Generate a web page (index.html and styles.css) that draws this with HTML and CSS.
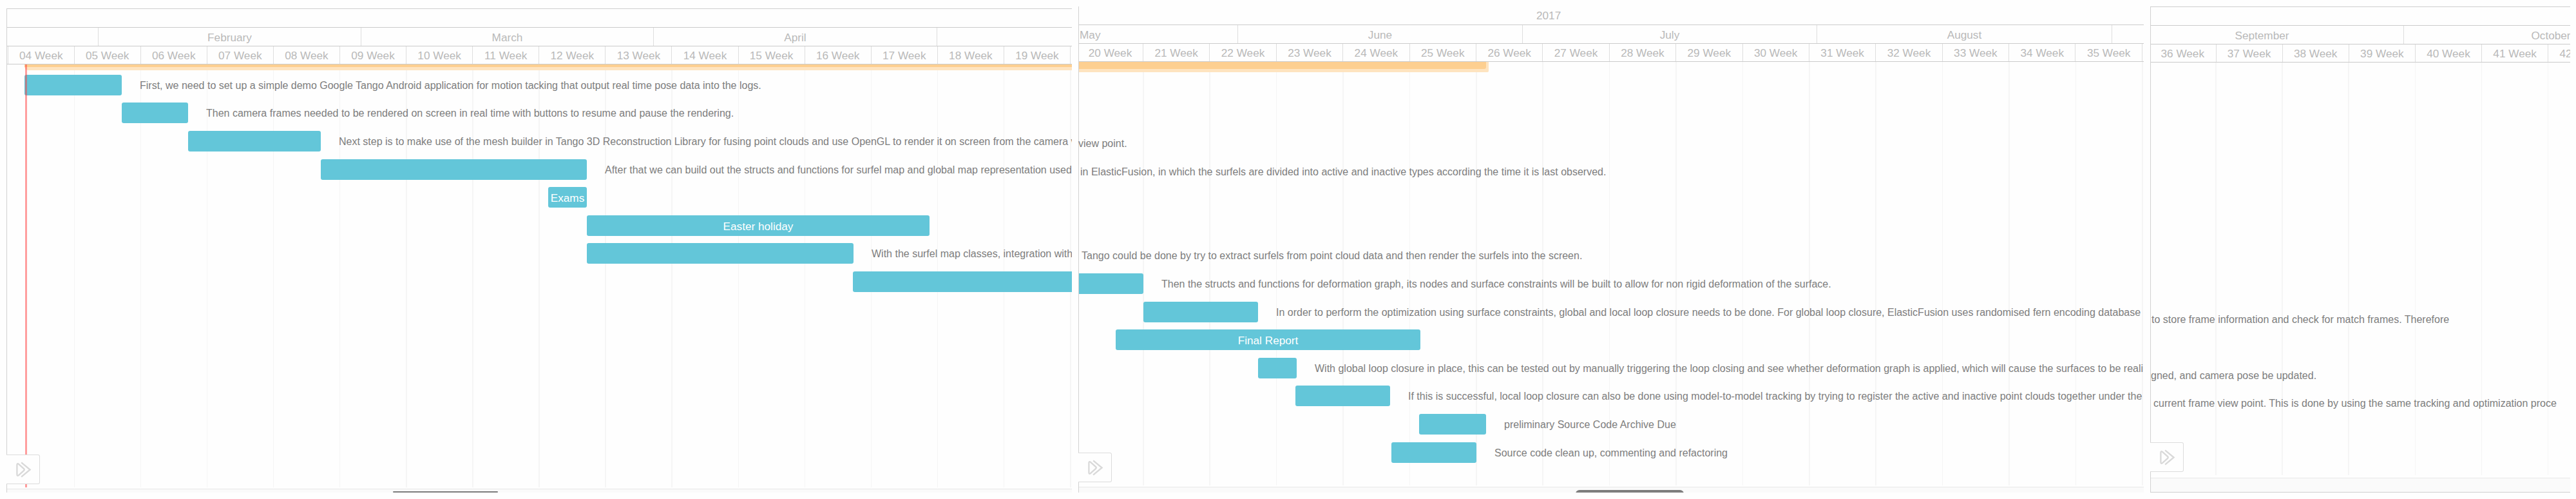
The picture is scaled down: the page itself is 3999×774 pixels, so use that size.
FILE: index.html
```html
<!DOCTYPE html>
<html lang="en">
<head>
<meta charset="utf-8">
<title>Project timeline</title>
<link rel="stylesheet" href="styles.css">
</head>
<body>
<main class="timeline">
  <section class="panel panel-spring">
    <header class="scale">
      <div class="years"></div>
      <div class="months"><span style="width:142px"></span><span style="width:408px">February</span><span style="width:454px">March</span><span style="width:440px">April</span></div>
      <div class="weeks"><span class="stub"></span><span class="first">04 Week</span><span>05 Week</span><span>06 Week</span><span>07 Week</span><span>08 Week</span><span>09 Week</span><span>10 Week</span><span>11 Week</span><span>12 Week</span><span>13 Week</span><span>14 Week</span><span>15 Week</span><span>16 Week</span><span>17 Week</span><span>18 Week</span><span>19 Week</span></div>
    </header>
    <div class="chart">
      <div class="summary"></div>
      <div class="today"></div>
      <div class="row"><i class="bar" style="margin-left:27px;width:151px"></i><span class="label">First, we need to set up a simple demo Google Tango Android application for motion tacking that output real time pose data into the logs.</span></div>
      <div class="row"><i class="bar" style="margin-left:178px;width:103px"></i><span class="label">Then camera frames needed to be rendered on screen in real time with buttons to resume and pause the rendering.</span></div>
      <div class="row"><i class="bar" style="margin-left:281px;width:206px"></i><span class="label">Next step is to make use of the mesh builder in Tango 3D Reconstruction Library for fusing point clouds and use OpenGL to render it on screen from the camera v</span></div>
      <div class="row"><i class="bar" style="margin-left:487px;width:413px"></i><span class="label">After that we can build out the structs and functions for surfel map and global map representation used</span></div>
      <div class="row"><b class="bar" style="margin-left:840px;width:60px">Exams</b></div>
      <div class="row"><b class="bar" style="margin-left:900px;width:532px">Easter holiday</b></div>
      <div class="row"><i class="bar" style="margin-left:900px;width:414px"></i><span class="label">With the surfel map classes, integration with</span></div>
      <div class="row"><i class="bar open-right" style="margin-left:1313px;width:340px"></i></div>
      <div class="toggle"><svg viewBox="0 0 26 26"><path d="M2.5 5.5 Q2.5 2 5.2 4.1 L13.6 11.5 Q15 13 13.6 14.5 L5.2 21.9 Q2.5 24 2.5 20.5 Z"/><path d="M9.5 1.5 L23.5 13 L9.5 24.5"/></svg></div>
    </div>
    <footer class="scroll"><div class="thumb"></div></footer>
  </section>

  <section class="panel panel-summer">
    <header class="scale">
      <div class="years"><span>2017</span></div>
      <div class="months"><span class="cut" style="width:247px">May</span><span style="width:442px">June</span><span style="width:457px">July</span><span style="width:458px">August</span></div>
      <div class="weeks"><span class="first">20 Week</span><span>21 Week</span><span>22 Week</span><span>23 Week</span><span>24 Week</span><span>25 Week</span><span>26 Week</span><span>27 Week</span><span>28 Week</span><span>29 Week</span><span>30 Week</span><span>31 Week</span><span>32 Week</span><span>33 Week</span><span>34 Week</span><span>35 Week</span></div>
    </header>
    <div class="chart">
      <div class="summary"></div>
      <div class="row"></div>
      <div class="row"></div>
      <div class="row"><span class="text" style="margin-left:-1px">view point.</span></div>
      <div class="row"><span class="text" style="margin-left:2px">in ElasticFusion, in which the surfels are divided into active and inactive types according the time it is last observed.</span></div>
      <div class="row"></div>
      <div class="row"></div>
      <div class="row"><span class="text" style="margin-left:4px">Tango could be done by try to extract surfels from point cloud data and then render the surfels into the screen.</span></div>
      <div class="row"><i class="bar open-left" style="width:100px"></i><span class="label">Then the structs and functions for deformation graph, its nodes and surface constraints will be built to allow for non rigid deformation of the surface.</span></div>
      <div class="row"><i class="bar" style="margin-left:100px;width:178px"></i><span class="label">In order to perform the optimization using surface constraints, global and local loop closure needs to be done. For global loop closure, ElasticFusion uses randomised fern encoding database</span></div>
      <div class="row"><b class="bar" style="margin-left:57px;width:473px">Final Report</b></div>
      <div class="row"><i class="bar" style="margin-left:278px;width:60px"></i><span class="label">With global loop closure in place, this can be tested out by manually triggering the loop closing and see whether deformation graph is applied, which will cause the surfaces to be reali</span></div>
      <div class="row"><i class="bar" style="margin-left:336px;width:147px"></i><span class="label">If this is successful, local loop closure can also be done using model-to-model tracking by trying to register the active and inactive point clouds together under the</span></div>
      <div class="row"><i class="bar" style="margin-left:528px;width:104px"></i><span class="label">preliminary Source Code Archive Due</span></div>
      <div class="row"><i class="bar" style="margin-left:485px;width:132px"></i><span class="label">Source code clean up, commenting and refactoring</span></div>
      <div class="toggle"><svg viewBox="0 0 26 26"><path d="M2.5 5.5 Q2.5 2 5.2 4.1 L13.6 11.5 Q15 13 13.6 14.5 L5.2 21.9 Q2.5 24 2.5 20.5 Z"/><path d="M9.5 1.5 L23.5 13 L9.5 24.5"/></svg></div>
    </div>
    <footer class="scroll"><div class="thumb"></div></footer>
  </section>

  <section class="panel panel-autumn">
    <header class="scale">
      <div class="years"></div>
      <div class="months"><span class="september" style="width:393px">September</span><span style="width:457px">October</span></div>
      <div class="weeks"><span class="first">36 Week</span><span>37 Week</span><span>38 Week</span><span>39 Week</span><span>40 Week</span><span>41 Week</span><span>42 Week</span></div>
    </header>
    <div class="chart">
      <div class="row"></div>
      <div class="row"></div>
      <div class="row"></div>
      <div class="row"></div>
      <div class="row"></div>
      <div class="row"></div>
      <div class="row"></div>
      <div class="row"></div>
      <div class="row"><span class="text" style="margin-left:1px">to store frame information and check for match frames. Therefore</span></div>
      <div class="row"></div>
      <div class="row"><span class="text">gned, and camera pose be updated.</span></div>
      <div class="row"><span class="text" style="margin-left:4px">current frame view point. This is done by using the same tracking and optimization proce</span></div>
      <div class="toggle"><svg viewBox="0 0 26 26"><path d="M2.5 5.5 Q2.5 2 5.2 4.1 L13.6 11.5 Q15 13 13.6 14.5 L5.2 21.9 Q2.5 24 2.5 20.5 Z"/><path d="M9.5 1.5 L23.5 13 L9.5 24.5"/></svg></div>
    </div>
    <footer class="scroll"></footer>
  </section>
</main>
</body>
</html>
```
FILE: styles.css
```css
* { box-sizing: border-box; }

body {
  margin: 0;
  background: #fefefe;
  font-family: "Liberation Sans", Arial, sans-serif;
  font-size: 17.2px;
  color: #b9b9b9;
}

.timeline {
  display: flex;
  align-items: flex-start;
  width: 3999px;
  height: 774px;
  overflow: hidden;
}

.panel {
  --week: 103.1px;
  --first: 102.6px;
  display: flex;
  flex-direction: column;
  flex: none;
  overflow: hidden;
  background: linear-gradient(#d2d2d2, #d2d2d2) 0 0 / 1px 100% no-repeat;
  padding-left: 1px;
}

.panel-spring { width: 1654px; height: 751px; margin: 13px 0 0 10px; border-top: 1px solid #cfcfcf; }
.panel-summer { --week: 103.4px; --first: 100px; width: 1654px; height: 754px; margin: 10px 0 0 10px; }
.panel-autumn { --week: 103.15px; --first: 101.5px; width: 652px; height: 754px; margin: 10px 0 0 10px; border: solid #cfcfcf; border-width: 1px 0 1px 0; }

.scale { flex: none; white-space: nowrap; }
.years, .months, .weeks { display: flex; height: 29px; border-bottom: 1px solid #cbcbcb; }
.weeks { height: 28px; }
.months span, .weeks span {
  flex: none;
  display: flex;
  align-items: center;
  justify-content: center;
  border-right: 1px solid #dedede;
  padding-top: 2px;
}
.weeks span { width: var(--week); }
.weeks .first { width: var(--first); }
.panel-summer .first, .panel-autumn .first { padding-right: 2px; }
.weeks .stub { width: 2px; padding: 0; }
.years span { display: flex; align-items: center; margin-left: 710px; }
.months .cut { justify-content: flex-start; padding-left: 1px; }
.months .september { padding-right: 47px; }

.chart {
  position: relative;
  flex: none;
  background: repeating-linear-gradient(90deg, transparent 0 calc(var(--week) - 1.5px), #f5f5f5 calc(var(--week) - 1.5px) var(--week)) no-repeat;
  background-position: var(--shift) 0;
  background-size: 2000px calc(100% - 2px);
}
.panel-spring .chart { --shift: 1.9px; height: 658px; padding-top: 10px; }
.panel-summer .chart { --shift: -2.9px; height: 659px; padding-top: 17px; }
.panel-autumn .chart { --shift: -1.5px; height: 644px; padding-top: 27px; background-size: 2000px calc(100% - 4px); }

.row { display: flex; align-items: center; height: 43.6px; white-space: nowrap; }
.bar {
  flex: none;
  display: flex;
  align-items: center;
  justify-content: center;
  height: 32px;
  padding-top: 3px;
  border-radius: 3px;
  background: #63c6d9;
  color: #fff;
  font-style: normal;
  font-weight: 400;
}
.open-right { border-radius: 3px 0 0 3px; }
.open-left { border-radius: 0 3px 3px 0; }
.label, .text { flex: none; padding-top: 2px; font-size: 16px; color: #7d7d7d; }
.label { margin-left: 28px; }

.summary { position: absolute; top: 0; left: 0; background: #fee4c0; }
.summary::before { content: ""; display: block; background: #fdcf90; }
.panel-spring .summary { left: 27px; right: 0; height: 9px; border-radius: 0 0 0 6px; }
.panel-spring .summary::before { height: 4px; }
.panel-summer .summary { width: 636px; height: 16px; border-radius: 0 0 2px 0; }
.panel-summer .summary::before { width: 632px; height: 11px; border-radius: 0 0 3px 0; }

.today { position: absolute; z-index: 1; left: 28px; top: 0; width: 3px; height: 656px; background: rgba(255, 62, 62, .5); }

.toggle {
  position: absolute;
  z-index: 2;
  left: -1px;
  width: 52px;
  height: 46px;
  padding: 10px 14px;
  border: 1px solid #dcdcdc;
  border-left: 0;
  border-radius: 0 3px 3px 0;
  background: #fefefe;
}
.panel-spring .toggle { top: 605px; }
.panel-summer .toggle { top: 606px; }
.panel-autumn .toggle { top: 589px; }
.toggle svg { display: block; width: 25px; height: 25px; fill: none; stroke: #d9d9d9; stroke-width: 2.4; }

.scroll { flex: 1; border-top: 1px solid #e8e8e8; background: #fafafa; overflow: hidden; }
.thumb { width: 168px; height: 14px; margin-top: 4px; border-radius: 6px; background: #7d7d7d; }
.panel-spring .thumb { width: 163px; height: 2px; margin: 3px 0 0 599px; border-radius: 1px; }
.panel-summer .thumb { margin-left: 771px; }
```
